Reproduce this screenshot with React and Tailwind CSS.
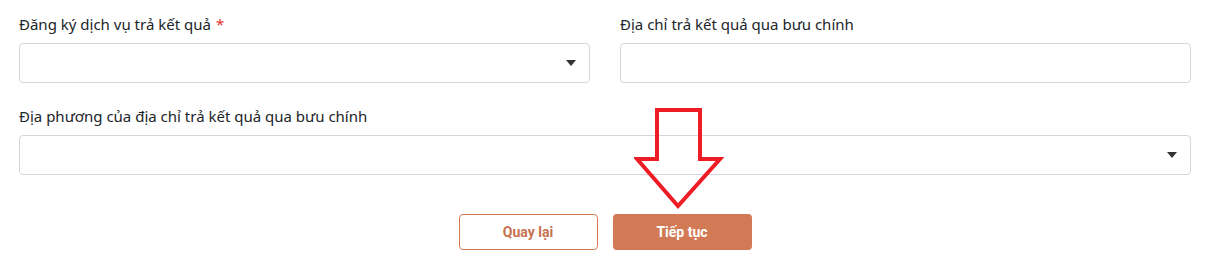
import { useState } from 'react';

function Caret() {
  return (
    <svg width="10" height="6" viewBox="0 0 10 6" className="absolute right-[13px] top-1/2 -translate-y-1/2">
      <path d="M0 0 L10 0 L5 6 Z" fill="#333" />
    </svg>
  );
}

function Field({ label, required, select }) {
  return (
    <div className="flex flex-col">
      <label className="text-[15px] leading-[21px] text-[#212529] mb-[8px]">
        {label}
        {required && <span className="text-[#e3342f] ml-[5px]">*</span>}
      </label>
      <div className="relative h-[40px] rounded-[4px] border border-[#d3d6da] bg-white">
        {select && <Caret />}
      </div>
    </div>
  );
}

export default function App() {
  const [step] = useState(2);

  return (
    <div className="relative w-[1210px] h-[255px] bg-white px-[19px] pt-[14px]" style={{ fontFamily: '"Noto Sans", "Segoe UI", sans-serif' }}>
      <div className="grid grid-cols-2 gap-x-[30px]">
        <Field label="Đăng ký dịch vụ trả kết quả" required select />
        <Field label="Địa chỉ trả kết quả qua bưu chính" />
      </div>
      <div className="mt-[23px]">
        <Field label="Địa phương của địa chỉ trả kết quả qua bưu chính" select />
      </div>
      <div className="flex justify-center gap-[15px] mt-[39px]" data-step={step}>
        <button className="w-[139px] h-[36px] rounded-[4px] border border-[#d27a56] bg-white text-[#c8714e] text-[14px] font-bold" style={{ fontFamily: 'Roboto, sans-serif' }}>
          Quay lại
        </button>
        <button className="w-[139px] h-[36px] rounded-[4px] bg-[#d27a56] text-white text-[14px] font-bold" style={{ fontFamily: 'Roboto, sans-serif' }}>
          Tiếp tục
        </button>
      </div>
      <svg className="absolute left-[634px] top-[106px]" width="92" height="106" viewBox="0 0 92 106">
        <path d="M23 4 L66 4 L66 53 L86 53 L44 100 L3 53 L23 53 Z" fill="none" stroke="#ee1c25" strokeWidth="4" strokeLinejoin="miter" />
      </svg>
    </div>
  );
}
